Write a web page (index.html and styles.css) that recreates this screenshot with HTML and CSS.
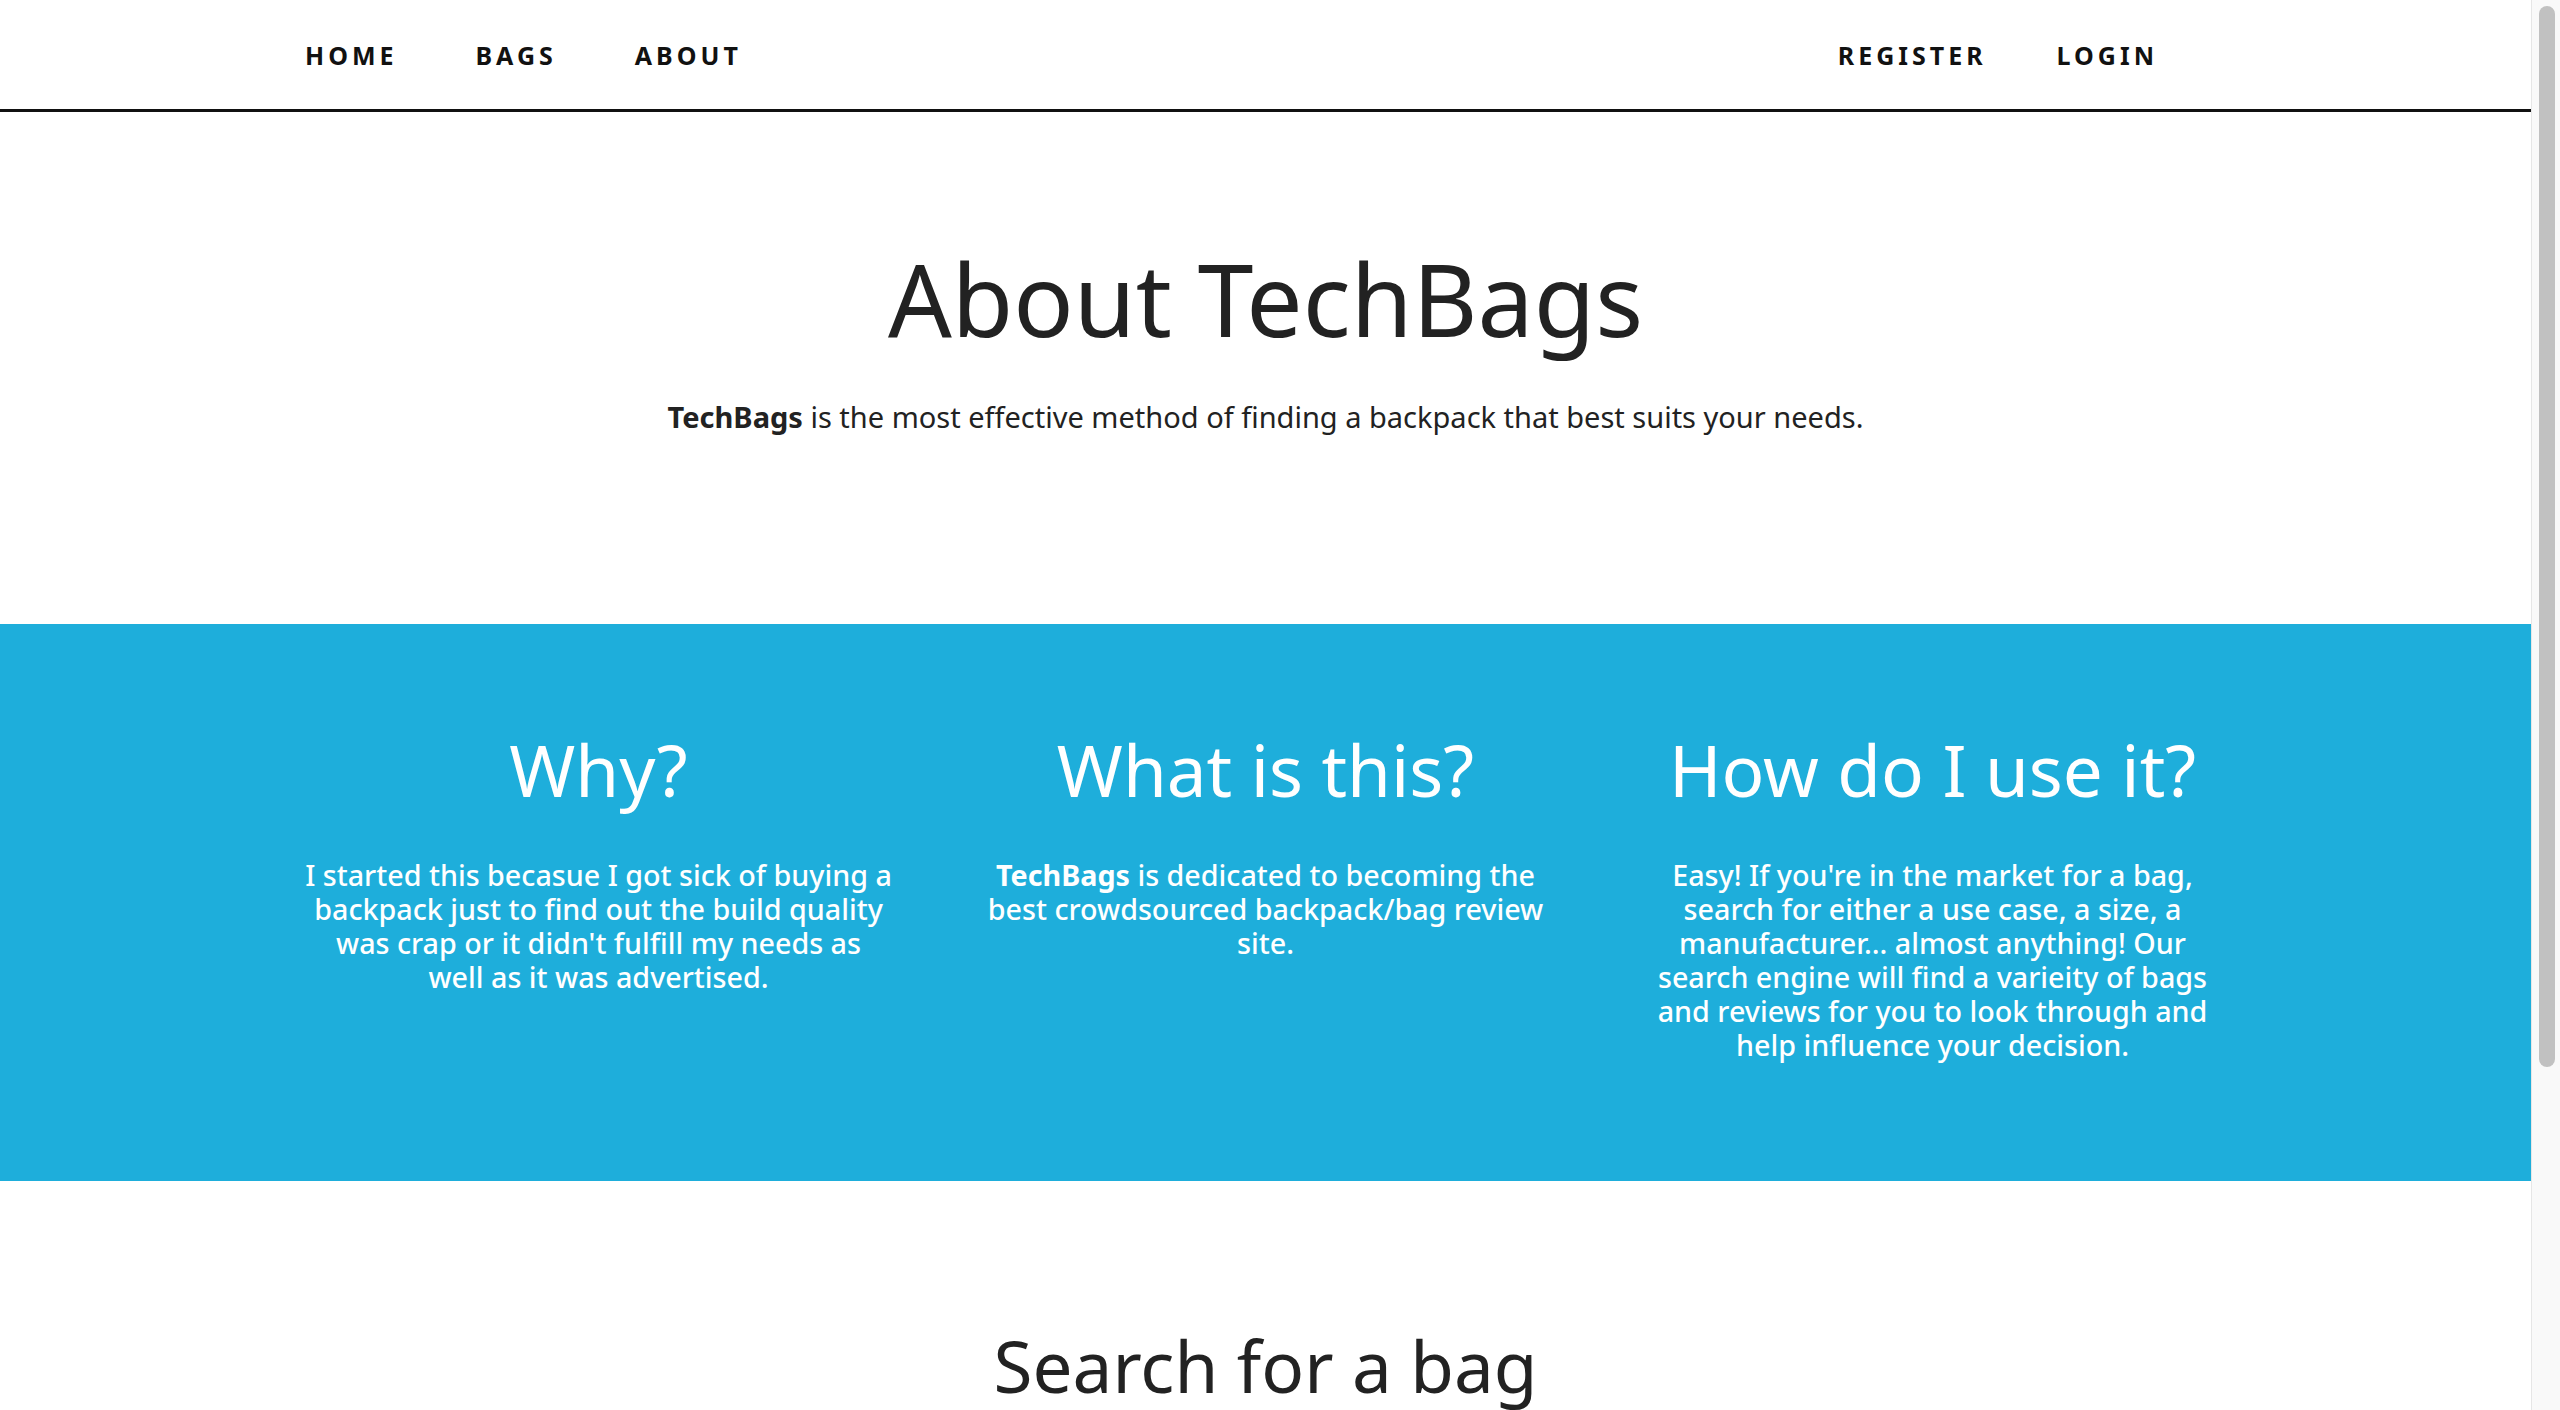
FILE: index.html
```html
<!DOCTYPE html>
<html lang="en">
<head>
<meta charset="utf-8">
<title>About TechBags</title>
<link rel="stylesheet" href="styles.css">
</head>
<body>
<div class="page">
  <nav class="nav">
    <ul class="nav-group">
      <li><a href="#">Home</a></li>
      <li><a href="#">Bags</a></li>
      <li><a href="#">About</a></li>
    </ul>
    <ul class="nav-group nav-group-right">
      <li><a href="#">Register</a></li>
      <li><a href="#">Login</a></li>
    </ul>
  </nav>

  <header class="hero">
    <h1 class="hero-title">About TechBags</h1>
    <p class="hero-lead"><strong>TechBags</strong> is the most effective method of finding a backpack that best suits your needs.</p>
  </header>

  <section class="info">
    <div class="info-grid">
      <div class="info-col">
        <h2 class="info-title">Why?</h2>
        <p class="info-text">I started this becasue I got sick of buying a<br>backpack just to find out the build quality<br>was crap or it didn't fulfill my needs as<br>well as it was advertised.</p>
      </div>
      <div class="info-col">
        <h2 class="info-title">What is this?</h2>
        <p class="info-text"><strong>TechBags</strong> is dedicated to becoming the<br>best crowdsourced backpack/bag review<br>site.</p>
      </div>
      <div class="info-col">
        <h2 class="info-title">How do I use it?</h2>
        <p class="info-text">Easy! If you're in the market for a bag,<br>search for either a use case, a size, a<br>manufacturer... almost anything! Our<br>search engine will find a varieity of bags<br>and reviews for you to look through and<br>help influence your decision.</p>
      </div>
    </div>
  </section>

  <section class="search">
    <h2 class="search-title">Search for a bag</h2>
  </section>
</div>
<div class="scrollbar"><div class="scrollbar-thumb"></div></div>
</body>
</html>
```

FILE: styles.css
```css
html, body {
  margin: 0;
  padding: 0;
  height: 100%;
  overflow: hidden;
}

body {
  display: flex;
  background: #fff;
  color: #222;
  font-family: "Noto Sans", "Open Sans", sans-serif;
}

.page {
  flex: 1;
  min-width: 0;
  height: 100%;
  overflow: hidden;
}

/* Navigation */
.nav {
  display: flex;
  justify-content: space-between;
  align-items: center;
  height: 109px;
  padding: 0 373px 0 305px;
  border-bottom: 3px solid #111;
}

.nav-group {
  display: flex;
  gap: 78px;
  margin: 0;
  padding: 0;
  list-style: none;
}

.nav-group-right {
  gap: 70px;
}

.nav-group a {
  color: #111;
  text-decoration: none;
  text-transform: uppercase;
  font-size: 25px;
  font-weight: 700;
  letter-spacing: 4px;
}

/* Hero */
.hero {
  text-align: center;
  padding-top: 126px;
  height: 512px;
  box-sizing: border-box;
}

.hero-title {
  margin: 0;
  font-size: 100px;
  font-weight: 400;
  line-height: 120px;
}

.hero-lead {
  margin: 39px 0 0;
  font-size: 29px;
  line-height: 40px;
}

/* Info band */
.info {
  background: #1eaedb;
  color: #fff;
  height: 557px;
  box-sizing: border-box;
  padding-top: 100px;
}

.info-grid {
  display: grid;
  grid-template-columns: repeat(3, 590px);
  column-gap: 77px;
  justify-content: center;
}

.info-col {
  text-align: center;
}

.info-title {
  margin: 0;
  font-size: 71px;
  font-weight: 400;
  line-height: 92px;
}

.info-text {
  margin: 42px 0 0;
  font-size: 28.7px;
  font-weight: 500;
  line-height: 34px;
  white-space: nowrap;
}

/* Search */
.search {
  text-align: center;
  padding-top: 139px;
}

.search-title {
  margin: 0;
  font-size: 71px;
  font-weight: 400;
  line-height: 92px;
}

/* Scrollbar */
.scrollbar {
  width: 29px;
  flex: none;
  height: 100%;
  background: #f9f9f9;
  border-left: 1px solid #e6e6e6;
  display: flex;
  justify-content: center;
  padding-top: 6px;
  box-sizing: border-box;
}

.scrollbar-thumb {
  width: 16px;
  height: 1061px;
  margin-left: 1px;
  background: #c1c1c1;
  border-radius: 8px;
}
```
